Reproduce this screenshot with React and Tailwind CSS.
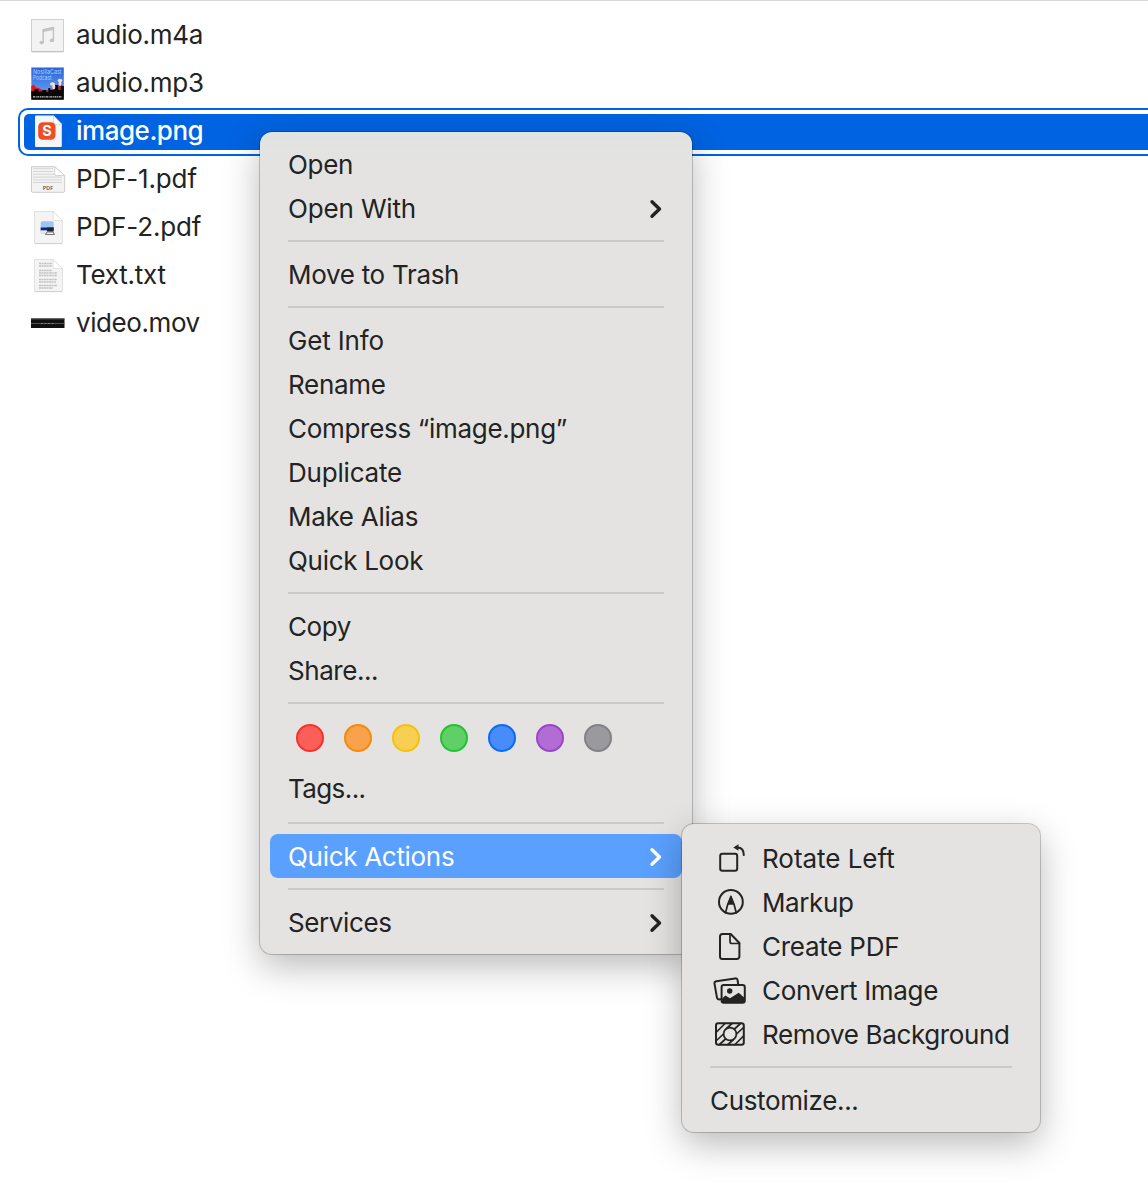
import React from "react";

const Page = ({ children }) => (
  <>
    <path d="M6.5 7.5h18.600l9.300 9V38a1.500 1.500 0 0 1-1.500 1.500H8A1.500 1.500 0 0 1 6.500 38z" fill="#f4f4f4" stroke="#dadada" strokeWidth="0.8" />
    <path d="M6.5 39.600h27.500" stroke="#c9c9c9" strokeWidth="0.8" />
    <path d="M25.100 7.500v7.500a1.500 1.500 0 0 0 1.500 1.500h7.800z" fill="#ffffff" stroke="#d6d6d6" strokeWidth="0.7" />
    {children}
  </>
);

const fileIcons = {
  m4a: (
    <>
      <rect x="3.5" y="7.5" width="32" height="32" fill="#f3f3f3" stroke="#d0d0d0" />
      <path d="M3.5 39.8h32" stroke="#bdbdbd" />
      <path d="M15.200 30.500V17.800l10.200-2.200v13" fill="none" stroke="#c2c2c2" strokeWidth="1.4" />
      <path d="M14.500 17.300l11.600-2.500v2.900L14.500 20.200z" fill="#c2c2c2" />
      <ellipse cx="13.700" cy="30.600" rx="2.200" ry="1.800" fill="#c2c2c2" />
      <ellipse cx="23.900" cy="28.400" rx="2.200" ry="1.800" fill="#c2c2c2" />
    </>
  ),
  mp3: (
    <>
      <defs>
        <linearGradient id="sky" x1="0" y1="0" x2="0" y2="1">
          <stop offset="0" stopColor="#2a62d6" />
          <stop offset="1" stopColor="#6fabfa" />
        </linearGradient>
      </defs>
      <rect x="3.3" y="7.5" width="32.500" height="32.300" fill="url(#sky)" />
      <path d="M3.300 26l2.500-1.500 2 3 3 .5 4 2.500 7-.5 4-2 4 1 2-4.500 4 2v10H3.300z" fill="#e3161c" />
      <path d="M3.300 31h3v-2h4v2.500h4v-1.500h4v2h2v-4h2v2h3v-5h5v5h2.500v-4h3v13.800H3.300z" fill="#070708" />
      <ellipse cx="24.500" cy="24" rx="2.600" ry="1.700" fill="#f8ddc4" />
      <ellipse cx="25.800" cy="27" rx="1.500" ry="2.400" fill="#f8ddc4" />
      <ellipse cx="32" cy="20.500" rx="2.300" ry="1.700" fill="#f8ddc4" />
      <ellipse cx="32" cy="23.600" rx="1.400" ry="2.300" fill="#f8ddc4" />
      <text x="5" y="14.300" fontSize="6" textLength="28.500" lengthAdjust="spacingAndGlyphs" fill="#a6d2fb">NosillaCast</text>
      <text x="5" y="19.500" fontSize="6" textLength="18.500" lengthAdjust="spacingAndGlyphs" fill="#a6d2fb">Podcast</text>
      <path d="M5 36.800h29" stroke="#cfcfcf" strokeWidth="1.300" strokeDasharray="2 0.700 1 0.600" />
    </>
  ),
  png: (
    <>
      <path d="M7 8.500a1 1 0 0 1 1-1h17.500l8.300 8.800V38a1 1 0 0 1-1 1H8a1 1 0 0 1-1-1z" fill="#f6f6f6" />
      <path d="M25.500 7.500V15a1.300 1.300 0 0 0 1.300 1.300h7z" fill="#ffffff" stroke="#c9ccd2" strokeWidth="0.600" />
      <rect x="10.200" y="14.200" width="17.300" height="17.500" rx="4.500" fill="#ef4d26" />
      <text x="19" y="28.300" fontSize="14.500" fontWeight="700" textAnchor="middle" fill="#ffffff">S</text>
    </>
  ),
  pdf1: (
    <>
      <path d="M3.500 10.700h23.200l10 9V35a1.300 1.300 0 0 1-1.300 1.300H4.800A1.300 1.300 0 0 1 3.500 35z" fill="#f3f3f3" stroke="#c6c6c6" strokeWidth="0.900" />
      <path d="M5 12.700h20M5 15.500h20M5 18.300h22M5 21.100h29M5 23.900h29M5 26.500h29" stroke="#d2d2d2" strokeWidth="0.900" />
      <path d="M26.700 10.700V18a1.500 1.500 0 0 0 1.500 1.500h8.500z" fill="#ffffff" stroke="#c6c6c6" strokeWidth="0.700" />
      <text x="20" y="34" fontSize="5.200" fontWeight="600" textAnchor="middle" textLength="10.500" fill="#555555">PDF</text>
    </>
  ),
  pdf2: (
    <Page>
      <rect x="12.700" y="17.200" width="13" height="12.500" rx="1.500" fill="#9cc5f5" />
      <rect x="12.700" y="23.500" width="13" height="3" fill="#12246b" />
      <rect x="13" y="26.500" width="8" height="3" fill="#dfe8f4" />
      <path d="M19 23.500h6.500v4H19z" fill="#20242e" />
      <path d="M17.500 30.500l1.500-2.500h6l1.500 2.500z" fill="#f2f2f2" stroke="#555555" strokeWidth="0.800" />
    </Page>
  ),
  txt: (
    <Page>
      <path
        d="M11 11.500h13M11 14h13M11 18.500h13M11 21h18M11 23.500h18M11 27.500h18M11 30h17M11 33.500h18M11 36h14"
        stroke="#c0c0c0"
        strokeWidth="1.300"
        strokeDasharray="2.500 0.500 1.500 0.600"
      />
    </Page>
  ),
  mov: (
    <>
      <rect x="3" y="18.500" width="33.500" height="9.500" fill="#111111" />
      <rect x="3" y="18.500" width="33.500" height="1" fill="#4a4a4a" />
      <path d="M3 23.500h33.500" stroke="#2b659c" strokeWidth="0.900" />
      <path d="M13 23.500h14" stroke="#9a8b66" strokeWidth="0.900" strokeDasharray="2 1.500" />
    </>
  ),
};

const files = [
  { name: "audio.m4a", icon: "m4a", spacing: "tracking-[-0.25px]" },
  { name: "audio.mp3", icon: "mp3", spacing: "tracking-[-0.25px]" },
  { name: "image.png", icon: "png", spacing: "tracking-[-0.48px]", selected: true },
  { name: "PDF-1.pdf", icon: "pdf1", spacing: "tracking-[-0.15px]" },
  { name: "PDF-2.pdf", icon: "pdf2", spacing: "tracking-[-0.15px]" },
  { name: "Text.txt", icon: "txt", spacing: "tracking-[-0.25px]" },
  { name: "video.mov", icon: "mov", spacing: "tracking-[-0.42px]" },
];

const tags = [
  "bg-[#fc5f57] border-[#f9302b]",
  "bg-[#f8a24b] border-[#f58a0c]",
  "bg-[#f7d053] border-[#f3c10e]",
  "bg-[#5fd065] border-[#22c233]",
  "bg-[#478cf8] border-[#0a6cf5]",
  "bg-[#b26cd6] border-[#9c44c8]",
  "bg-[#9a9a9e] border-[#818186]",
];

const quickActions = [
  {
    label: "Rotate Left",
    spacing: "tracking-[-0.03px]",
    icon: (
      <>
        <rect x="10.200" y="17.700" width="17" height="17" rx="2.200" />
        <path d="M27.500 11.500c4.300 0 6.300 2.800 6.300 7.500" />
        <path d="M23.300 11.500l5.200-3.300v6.600z" fill="currentColor" stroke="none" />
      </>
    ),
  },
  {
    label: "Markup",
    spacing: "tracking-[-0.4px]",
    icon: (
      <>
        <circle cx="20.900" cy="21.900" r="11.900" />
        <path d="M20.900 16.500l-3.200 8-2.200 8.500M20.900 16.500l3.200 8 2.200 8.500" strokeWidth="1.700" />
        <path d="M20.900 15.500l-3.800 9.300h7.600z" fill="currentColor" stroke="none" />
      </>
    ),
  },
  {
    label: "Create PDF",
    spacing: "tracking-[-0.25px]",
    icon: (
      <>
        <path d="M12.500 10h8.200l8.700 9v13.500a2.500 2.500 0 0 1-2.500 2.500H12.500a2.500 2.500 0 0 1-2.500-2.500v-20a2.500 2.500 0 0 1 2.500-2.500z" />
        <path d="M20 10v7.500a2 2 0 0 0 2 2h7.400" strokeWidth="1.700" />
      </>
    ),
  },
  {
    label: "Convert Image",
    spacing: "tracking-[-0.33px]",
    icon: (
      <>
        <path d="M10.500 31.300l-1.500.1a2 2 0 0 1-2-1.600L4.500 15.700a2.200 2.200 0 0 1 1.800-2.500l18.800-2.800a2.200 2.200 0 0 1 2.500 1.800l.6 4.500" />
        <rect x="11.600" y="17" width="23.200" height="17.800" rx="2.200" />
        <circle cx="19.700" cy="23" r="2.700" fill="currentColor" stroke="none" />
        <path d="M11.500 31.300l3.800-3.800 4.700 2.800 8.700-5.500 6.300 5.500v4H12z" fill="currentColor" stroke="none" />
      </>
    ),
  },
  {
    label: "Remove Background",
    spacing: "tracking-[-0.35px]",
    icon: (
      <>
        <rect x="6" y="11.300" width="27.800" height="21.500" rx="2.300" />
        <circle cx="20" cy="22" r="6.400" strokeWidth="1.700" />
        <path
          d="M6.500 20L15 11.500M6.500 28.500l7-6.500M9.500 32.500l6-5.500M16.500 16.500l5.500-5M33.500 15.500l-7 6.500M30.500 11.500l-6 5.500M23.500 27.500l-5.500 5M33.500 24L25 32.500"
          strokeWidth="1.700"
        />
      </>
    ),
  },
];

const Chevron = () => (
  <svg className="h-5 w-4 shrink-0" viewBox="0 0 16 20" fill="none" stroke="currentColor" strokeWidth="3.400" strokeLinecap="round" strokeLinejoin="round">
    <path d="M4 2.800L11.500 10 4 17.200" />
  </svg>
);

const Item = ({ label, submenu, active, size = "h-11", spacing = "tracking-[-0.3px]" }) => (
  <div
    className={`mx-2.5 flex shrink-0 items-center justify-between rounded-lg px-[18px] pt-0.5 ${size} ${
      active ? "bg-[#5aa0fe] text-white" : ""
    }`}
  >
    <span className={spacing}>{label}</span>
    {submenu && <Chevron />}
  </div>
);

const Separator = () => (
  <div className="mx-7 flex h-[22px] shrink-0 items-center">
    <div className="h-0.5 w-full bg-[#cbcac9]" />
  </div>
);

const ContextMenu = () => (
  <div className="absolute left-[260px] top-[132px] flex h-[822px] w-[432px] flex-col rounded-[12px] bg-[#e4e3e1] bg-linear-to-b from-[#e0e3e2] to-[#e4e3e1] to-[24px] pt-2.5 shadow-[0_0_0_1px_rgba(0,0,0,0.2),0_12px_36px_rgba(0,0,0,0.28)]">
    <Item label="Open" />
    <Item label="Open With" submenu spacing="tracking-[-0.15px]" />
    <Separator />
    <Item label="Move to Trash" />
    <Separator />
    <Item label="Get Info" spacing="tracking-[-0.15px]" />
    <Item label="Rename" />
    <Item label="Compress “image.png”" />
    <Item label="Duplicate" spacing="tracking-[-0.2px]" />
    <Item label="Make Alias" />
    <Item label="Quick Look" />
    <Separator />
    <Item label="Copy" spacing="tracking-[-0.4px]" />
    <Item label="Share..." spacing="tracking-[-0.45px]" />
    <Separator />
    <div className="flex h-[52px] shrink-0 gap-5 pl-9 pt-2.5">
      {tags.map((color) => (
        <div key={color} className={`size-7 rounded-full border-2 ${color}`} />
      ))}
    </div>
    <Item label="Tags..." size="h-[46px] pb-0.5" spacing="tracking-[-0.6px]" />
    <Separator />
    <Item label="Quick Actions" submenu active />
    <Separator />
    <Item label="Services" submenu spacing="tracking-[-0.4px]" />
  </div>
);

const QuickActionsMenu = () => (
  <div className="absolute left-[682px] top-[824px] flex h-[308px] w-[358px] flex-col rounded-[12px] bg-[#e4e3e1] pt-3 shadow-[0_0_0_1px_rgba(0,0,0,0.2),0_12px_36px_rgba(0,0,0,0.28)]">
    {quickActions.map((action) => (
      <div key={action.label} className="flex h-11 shrink-0 items-center pl-7">
        <svg className="h-11 w-10 shrink-0" viewBox="0 0 40 44" fill="none" stroke="currentColor" strokeWidth="2" strokeLinecap="round" strokeLinejoin="round">
          {action.icon}
        </svg>
        <span className={`ml-3 whitespace-nowrap pt-0.5 ${action.spacing}`}>{action.label}</span>
      </div>
    ))}
    <Separator />
    <Item label="Customize..." spacing="tracking-[-0.35px]" />
  </div>
);

const App = () => {
  return (
    <div className="relative h-[1196px] w-[1148px] overflow-hidden bg-white font-['Inter',sans-serif] text-[26px] leading-[42px] text-[#232323]">
      <div className="h-px bg-[#d9d9d9]" />
      <div className="flex flex-col pt-[11px]">
        {files.map((file) => (
          <div
            key={file.name}
            className={
              file.selected
                ? "ml-[18px] h-12 rounded-l-[10px] border-y-2 border-l-2 border-[#0063e1] py-1 pl-1"
                : "ml-6 h-12"
            }
          >
            <div
              className={`flex items-center pl-1 ${
                file.selected ? "h-9 rounded-l-[5px] bg-[#0063e1] font-medium text-white" : "h-12"
              }`}
            >
              <svg className="h-12 w-10 shrink-0" viewBox="0 0 40 48">
                {fileIcons[file.icon]}
              </svg>
              <span className={`ml-2 whitespace-nowrap pb-0.5 ${file.spacing}`}>{file.name}</span>
            </div>
          </div>
        ))}
      </div>
      <ContextMenu />
      <QuickActionsMenu />
    </div>
  );
};

export default App;
